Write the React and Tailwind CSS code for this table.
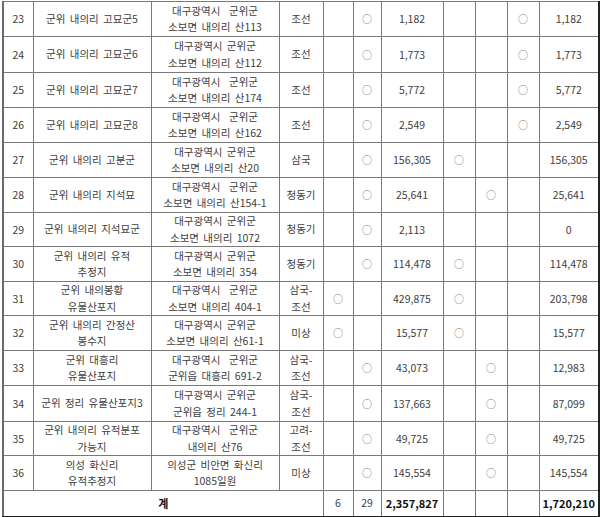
import React from "react";

const rows = [
  ["23", ["군위 내의리 고묘군5"], ["대구광역시  군위군", "소보면 내의리 산113"], ["조선"], "", "○", "1,182", "", "", "○", "1,182", "h-[35px]"],
  ["24", ["군위 내의리 고묘군6"], ["대구광역시 군위군", "소보면 내의리 산112"], ["조선"], "", "○", "1,773", "", "", "○", "1,773", "h-[36px]"],
  ["25", ["군위 내의리 고묘군7"], ["대구광역시  군위군", "소보면 내의리 산174"], ["조선"], "", "○", "5,772", "", "", "○", "5,772", "h-[35px]"],
  ["26", ["군위 내의리 고묘군8"], ["대구광역시  군위군", "소보면 내의리 산162"], ["조선"], "", "○", "2,549", "", "", "○", "2,549", "h-[35px]"],
  ["27", ["군위 내의리 고분군"], ["대구광역시 군위군", "소보면 내의리 산20"], ["삼국"], "", "○", "156,305", "○", "", "", "156,305", "h-[35px]"],
  ["28", ["군위 내의리 지석묘"], ["대구광역시  군위군", "소보면 내의리 산154-1"], ["청동기"], "", "○", "25,641", "", "○", "", "25,641", "h-[35px]"],
  ["29", ["군위 내의리 지석묘군"], ["대구광역시 군위군", "소보면 내의리 1072"], ["청동기"], "", "○", "2,113", "", "", "", "0", "h-[34px]"],
  ["30", ["군위 내의리 유적", "추정지"], ["대구광역시 군위군", "소보면 내의리 354"], ["청동기"], "", "○", "114,478", "○", "", "", "114,478", "h-[35px]"],
  ["31", ["군위 내의봉황", "유물산포지"], ["대구광역시  군위군", "소보면 내의리 404-1"], ["삼국-", "조선"], "○", "", "429,875", "○", "", "", "203,798", "h-[34px]"],
  ["32", ["군위 내의리 간정산", "봉수지"], ["대구광역시 군위군", "소보면 내의리 산61-1"], ["미상"], "○", "", "15,577", "○", "", "", "15,577", "h-[35px]"],
  ["33", ["군위 대흥리", "유물산포지"], ["대구광역시  군위군", "군위읍 대흥리 691-2"], ["삼국-", "조선"], "", "○", "43,073", "", "○", "", "12,983", "h-[35px]"],
  ["34", ["군위 정리 유물산포지3"], ["대구광역시 군위군", "군위읍 정리 244-1"], ["삼국-", "조선"], "", "○", "137,663", "", "○", "", "87,099", "h-[36px]"],
  ["35", ["군위 내의리 유적분포", "가능지"], ["대구광역시  군위군", "내의리 산76"], ["고려-", "조선"], "", "○", "49,725", "", "○", "", "49,725", "h-[34px]"],
  ["36", ["의성 화신리", "유적추정지"], ["의성군 비안면 화신리", "1085일원"], ["미상"], "", "○", "145,554", "", "○", "", "145,554", "h-[35px]"],
];

const cell = "border border-[#7a7a7a] text-center align-middle p-0 whitespace-pre";

function Lines({ lines }) {
  return (
    <div className="flex flex-col items-center justify-center leading-[16.5px] [word-spacing:2px]">
      {lines.map((l, i) => (
        <span key={i}>{l}</span>
      ))}
    </div>
  );
}

function Circle({ v }) {
  return v ? <span className="text-[10px] text-[#777]">○</span> : null;
}

export default function App() {
  return (
    <div className="w-[600px] h-[517px] bg-white pl-[2px] pt-[1px] overflow-hidden">
      <table
        className="table-fixed border-collapse w-[596px] text-[10.5px] text-[#404040] border-l-2 border-t border-r-2 border-b-2 border-l-[#6a6a6a] border-t-[#6a6a6a] border-r-[#222] border-b-[#222]"
        style={{ fontFamily: '"Noto Sans CJK KR", "Noto Sans", sans-serif' }}
      >
        <colgroup>
          <col className="w-[30px]" />
          <col className="w-[118px]" />
          <col className="w-[128px]" />
          <col className="w-[44px]" />
          <col className="w-[30px]" />
          <col className="w-[28px]" />
          <col className="w-[62px]" />
          <col className="w-[32px]" />
          <col className="w-[32px]" />
          <col className="w-[32px]" />
          <col className="w-[60px]" />
        </colgroup>
        <tbody>
          {rows.map((r) => (
            <tr key={r[0]} className={r[11]}>
              <td className={cell}>{r[0]}</td>
              <td className={cell}><Lines lines={r[1]} /></td>
              <td className={cell}><Lines lines={r[2]} /></td>
              <td className={cell}><Lines lines={r[3]} /></td>
              <td className={cell}><Circle v={r[4]} /></td>
              <td className={cell}><Circle v={r[5]} /></td>
              <td className={cell}>{r[6]}</td>
              <td className={cell}><Circle v={r[7]} /></td>
              <td className={cell}><Circle v={r[8]} /></td>
              <td className={cell}><Circle v={r[9]} /></td>
              <td className={cell}>{r[10]}</td>
            </tr>
          ))}
          <tr className="h-[26px]">
            <td colSpan={4} className={cell + " font-bold text-[#111] text-[11px]"}>계</td>
            <td className={cell}>6</td>
            <td className={cell}>29</td>
            <td className={cell + " font-bold text-[#111] text-[11px]"}>2,357,827</td>
            <td className={cell}></td>
            <td className={cell}></td>
            <td className={cell}></td>
            <td className={cell + " font-bold text-[#111] text-[11px]"}>1,720,210</td>
          </tr>
        </tbody>
      </table>
    </div>
  );
}
